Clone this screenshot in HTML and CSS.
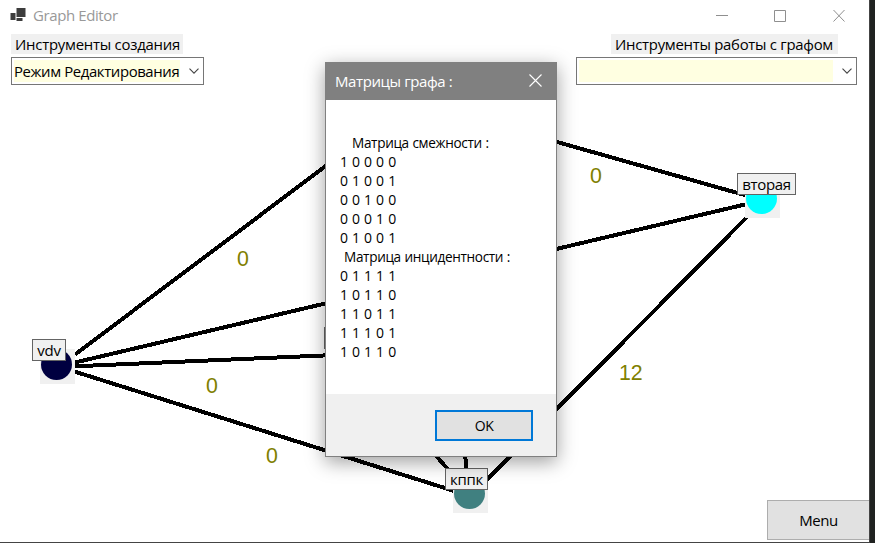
FILE: index.html
```html
<!DOCTYPE html>
<html lang="ru">
<head>
<meta charset="utf-8">
<title>Graph Editor</title>
<link rel="stylesheet" href="styles.css">
</head>
<body>
<div class="window">
  <header class="titlebar">
    <svg class="app-icon" width="17" height="16" viewBox="0 0 17 16"><path fill="#3c3c3c" d="M6.500 1h9v9h-9zM.5 6h5v7h-5zM6.500 11h6v3h-6z"/></svg>
    <h1 class="app-title">Graph Editor</h1>
    <svg class="win-controls" width="130" height="14" viewBox="0 0 130 14" fill="none" stroke="#8f8f8f"><path d="M0 7.500h12M58.500 2.500h11v11h-11z"/><path d="M117.500 2l11 11.500M128.500 2l-11 11.500"/></svg>
  </header>
  <div class="toolbar">
    <section class="tool tool-create">
      <label class="tool-label"><span class="t-create">Инструменты создания</span></label>
      <div class="combo"><span class="combo-value"><span class="t-mode">Режим Редактирования</span></span><svg class="chevron" width="10" height="6" viewBox="0 0 10 6"><path d="M.5.7L5 5.200 9.500.7" fill="none" stroke="#444" stroke-width="1.100"/></svg></div>
    </section>
    <section class="tool tool-graph">
      <label class="tool-label"><span class="t-work">Инструменты работы с графом</span></label>
      <div class="combo"><span class="combo-value"></span><svg class="chevron" width="10" height="6" viewBox="0 0 10 6"><path d="M.5.7L5 5.200 9.500.7" fill="none" stroke="#444" stroke-width="1.100"/></svg></div>
    </section>
  </div>
  <main class="canvas">
    <svg class="edges" width="875" height="543" viewBox="0 0 875 543">
      <g stroke="#000" stroke-width="4" shape-rendering="crispEdges">
        <path d="M75 354.500L335 159M75 362.500L747 204M75 366.300L335 355M75 371.700L456 491.500M550 140L750 196.500M749 215L484 482.500M430 449L453 475M464.500 450L467 473"/>
      </g>
    </svg>
    <span class="weight w1">0</span>
    <span class="weight w2">0</span>
    <span class="weight w3">0</span>
    <span class="weight w4">0</span>
    <span class="weight w5">12</span>
    <div class="node n1"><i class="dot"></i></div>
    <div class="node n2"><i class="dot"></i></div>
    <div class="node n3"><i class="dot"></i></div>
    <span class="name name1">vdv</span>
    <span class="name name2">вторая</span>
    <span class="name name3">кппк</span>
    <span class="name name4"></span>
  </main>
  <button class="menu">Menu</button>
</div>
<div class="dialog">
  <header class="dialog-title"><span class="t-dialog">Матрицы графа :</span><svg width="13" height="13" viewBox="0 0 13 13"><path d="M.5.5l12 12M12.500.5l-12 12" fill="none" stroke="#fff" stroke-width="1.100"/></svg></header>
  <div class="dialog-body">
    <div class="heading h-adj">Матрица смежности :</div>
    <div>1 0 0 0 0</div>
    <div>0 1 0 0 1</div>
    <div>0 0 1 0 0</div>
    <div>0 0 0 1 0</div>
    <div>0 1 0 0 1</div>
    <div class="heading h-inc">Матрица инцидентности :</div>
    <div>0 1 1 1 1</div>
    <div>1 0 1 1 0</div>
    <div>1 1 0 1 1</div>
    <div>1 1 1 0 1</div>
    <div>1 0 1 1 0</div>
  </div>
  <footer class="dialog-footer"><button class="ok">OK</button></footer>
</div>
</body>
</html>
```
FILE: styles.css
```css
* { box-sizing: border-box; }
body {
  margin: 0;
  height: 543px;
  overflow: hidden;
  background: #202221;
  font-family: "Open Sans", "Noto Sans", sans-serif;
  font-size: 15px;
  color: #000;
}
span { white-space: nowrap; }
button { font-family: inherit; padding: 0; }
.window {
  position: relative;
  width: 870px;
  height: 543px;
  display: flex;
  flex-direction: column;
  background: #fff;
  border-right: 1px solid #444;
  border-bottom: 1px solid #444;
}
.titlebar { display: flex; align-items: center; height: 31px; padding: 0 0 2px 10px; }
.app-icon { margin-right: 6px; }
.app-title { margin: 0; font-size: 15px; font-weight: 400; color: #999; letter-spacing: -0.4px; }
.win-controls { margin-left: auto; margin-right: 23px; }
.toolbar { display: flex; justify-content: space-between; padding: 3px 12px 0 11px; }
.tool { display: flex; flex-direction: column; align-items: flex-start; gap: 3px; }
.tool-create { width: 193px; }
.tool-graph { width: 281px; }
.tool-label { display: flex; align-items: center; height: 20px; padding-left: 4px; background: #f0f0f0; }
.tool-create .tool-label { width: 172px; }
.tool-graph .tool-label { width: 227px; margin-left: 35px; }
.combo {
  display: flex;
  align-items: center;
  justify-content: space-between;
  width: 100%;
  height: 28px;
  padding: 0 4px 0 2px;
  border: 1px solid #767676;
  background: #fff;
}
.combo-value { display: flex; align-items: center; height: 22px; padding-bottom: 1px; background: #ffffe1; }
.tool-create .combo-value { width: 166px; }
.tool-graph .combo-value { width: 254px; }
.t-create { letter-spacing: -0.24px; }
.t-create, .t-work, .t-mode { font-size: 14.9px; }
.t-mode { letter-spacing: -0.38px; }
.t-work { letter-spacing: -0.27px; }

.canvas { position: absolute; inset: 0; pointer-events: none; }
.edges { display: block; }
.weight { position: absolute; font: 21.33px/24px "Liberation Sans", Arial, sans-serif; color: #808000; }
.w1 { left: 237px; top: 247px; }
.w2 { left: 206px; top: 374px; }
.w3 { left: 266px; top: 444px; }
.w4 { left: 590px; top: 164px; }
.w5 { left: 619px; top: 361px; }
.node { position: absolute; width: 35px; height: 35px; padding: 0 1px; background: #f0f0f0; }
.dot { display: block; width: 31px; height: 31px; border-radius: 50%; }
.n1 { left: 40px; top: 349px; }
.n2 { left: 745px; top: 183px; }
.n3 { left: 453px; top: 478px; }
.n1 .dot { background: #000040; }
.n2 .dot { background: #0ff; }
.n3 .dot { background: #408080; }
.name {
  position: absolute;
  height: 22px;
  border: 1px solid #646464;
  background: #f0f0f0;
  line-height: 21px;
  text-align: center;
  letter-spacing: -0.3px;
}
.name1 { left: 32px; top: 339px; width: 34px; }
.name2 { left: 737px; top: 173px; width: 59px; }
.name3 { left: 445px; top: 468px; width: 43px; }
.name4 { left: 324px; top: 327px; width: 40px; }
.menu {
  width: 102px;
  height: 40px;
  margin: auto 0 2px auto;
  border: 1px solid #adadad;
  border-right: 0;
  background: #e1e1e1;
  font-size: 15px;
  letter-spacing: -0.4px;
  color: #000;
}

.dialog {
  position: absolute;
  left: 325px;
  top: 62px;
  width: 232px;
  height: 395px;
  display: flex;
  flex-direction: column;
  border: 1px solid #808080;
  background: #fff;
  box-shadow: 0 5px 18px rgba(0, 0, 0, 0.38);
}
.dialog-title {
  display: flex;
  align-items: center;
  justify-content: space-between;
  height: 37px;
  padding: 0 14px 2px 9px;
  background: #808080;
  color: #fff;
}
.t-dialog { letter-spacing: -0.4px; }
.dialog-body { flex: 1; padding: 33px 0 0 14px; font-size: 14px; line-height: 19px; white-space: nowrap; word-spacing: 0.4px; }
.h-adj { padding-left: 12px; }
.h-inc { padding-left: 4px; }
.heading { font-size: 13.6px; letter-spacing: -0.34px; }
.dialog-footer { display: flex; justify-content: flex-end; height: 62px; padding: 16px 23px 0 0; background: #f0f0f0; }
.ok { width: 98px; height: 31px; border: 2px solid #0078d7; background: #e1e1e1; font-size: 14px; letter-spacing: -0.4px; color: #000; }
```
